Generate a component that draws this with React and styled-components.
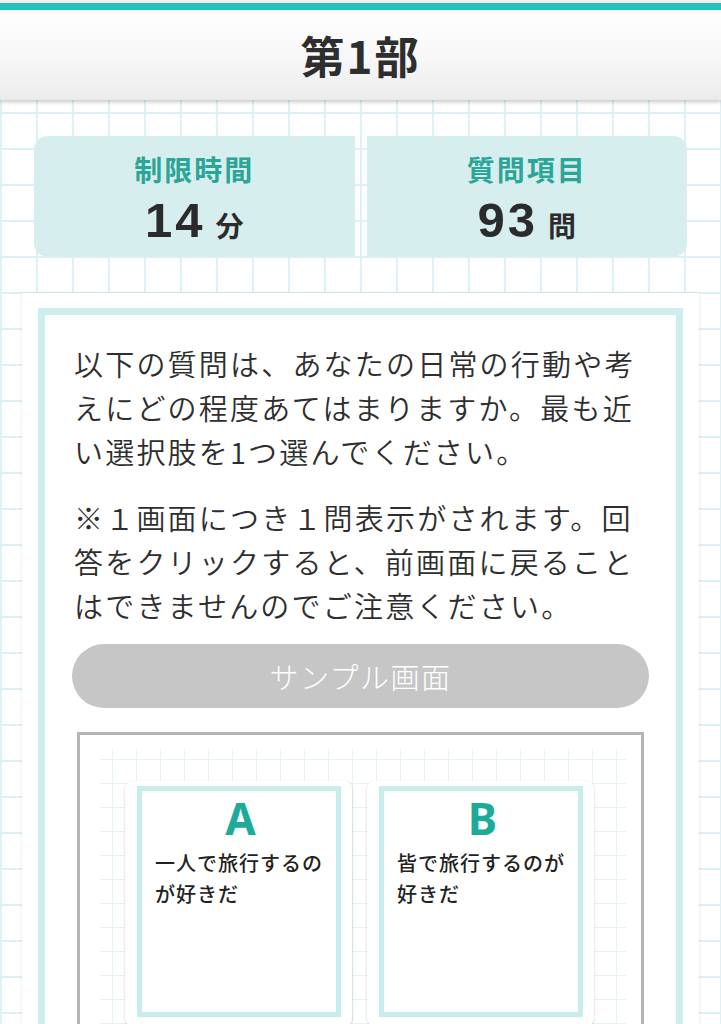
import styled, { createGlobalStyle } from 'styled-components'

const GlobalStyle = createGlobalStyle`
  html, body {
    margin: 0;
    padding: 0;
  }
  body {
    font-family: "Noto Sans CJK JP", "Noto Sans", sans-serif;
    color: #333;
    background-color: #fff;
  }
`

const Page = styled.div`
  min-height: 100vh;
  padding-bottom: 60px;
  background-color: #fff;
  background-image:
    linear-gradient(#dcf1f5 2px, transparent 2px),
    linear-gradient(90deg, #dcf1f5 2px, transparent 2px);
  background-size: 36px 36px;
  background-position: 0 4px, 0 0;
`

const Header = styled.header`
  height: 100px;
  box-sizing: border-box;
  padding-top: 10px;
  display: flex;
  align-items: center;
  justify-content: center;
  background: linear-gradient(
    to bottom,
    #f2f2f2 0,
    #f2f2f2 3px,
    #21c1bc 3px,
    #21c1bc 10px,
    #ffffff 10px,
    #f7f7f7 60%,
    #ebebeb 100%
  );
  box-shadow: 0 2px 4px rgba(0, 0, 0, 0.22);
  position: relative;
  z-index: 1;
`

const Title = styled.h1`
  margin: 0;
  font-size: 44px;
  font-weight: 700;
  letter-spacing: 2px;
  color: #2e2e2e;
  line-height: 1;
`

const Stats = styled.div`
  margin: 36px 34px 0;
  height: 121px;
  display: grid;
  grid-template-columns: 1fr 1fr;
  gap: 12px;
  border-radius: 14px;
  overflow: hidden;
`

const StatCard = styled.div`
  background: #d6eeed;
  display: flex;
  flex-direction: column;
  align-items: center;
  padding-top: 16px;
  box-sizing: border-box;
`

const StatLabel = styled.div`
  font-size: 28px;
  line-height: 34px;
  font-weight: 700;
  letter-spacing: 2px;
  color: #2aa597;
`

const StatValue = styled.div`
  display: flex;
  align-items: baseline;
  gap: 10px;
  margin-top: 6px;
  color: #2b2b2b;
  line-height: 56px;
`

const Number = styled.span`
  font-family: "Liberation Sans", Arial, sans-serif;
  font-size: 49px;
  font-weight: 700;
  letter-spacing: 3px;
`

const Unit = styled.span`
  font-size: 28px;
  font-weight: 700;
`

const Panel = styled.section`
  margin: 36px 22px 0;
  padding: 15px 16px 0;
  background: #fff;
  box-shadow: 0 0 3px rgba(0, 0, 0, 0.12);
`

const Inner = styled.div`
  border: 7px solid #cdeeee;
  border-bottom: none;
  padding: 26px 27px 40px;
`

const Paragraph = styled.p`
  margin: ${({ $first }) => ($first ? '0' : '22px 0 0')};
  padding-left: 2px;
  max-width: 572px;
  font-size: 29px;
  line-height: 44px;
  letter-spacing: 2.2px;
  color: #2e2e2e;
  font-weight: 350;
`

const SampleButton = styled.button`
  display: block;
  width: 100%;
  height: 64px;
  margin-top: 17px;
  border: none;
  border-radius: 32px;
  background: #c6c6c6;
  color: #fff;
  font-family: inherit;
  font-size: 29px;
  letter-spacing: 1.5px;
  font-weight: 300;
  cursor: pointer;
`

const SampleFrame = styled.div`
  margin: 24px 5px 0;
  border: 3px solid #b5b5b5;
  padding: 14px 15px 40px 20px;
  background: #fff;
`

const SampleGrid = styled.div`
  padding: 32px 32px 30px 25px;
  display: grid;
  grid-template-columns: 1fr 1fr;
  gap: 15px;
  background-image:
    linear-gradient(#e3f3f6 1px, transparent 1px),
    linear-gradient(90deg, #e3f3f6 1px, transparent 1px);
  background-size: 24px 24px;
  background-position: 0 10px, 12px 0;
`

const ChoiceCard = styled.div`
  background: #fff;
  border-radius: 8px;
  box-shadow: 0 1px 3px rgba(0, 0, 0, 0.18);
  padding: 5px 11px 9px 12px;
`

const ChoiceInner = styled.div`
  border: 5px solid #c9ecec;
  height: 218px;
  padding: 3px 10px 0 13px;
`

const ChoiceLetter = styled.div`
  text-align: center;
  font-family: "Noto Sans", sans-serif;
  font-size: 44px;
  line-height: 48px;
  font-weight: 700;
  color: #1dab99;
  margin-bottom: 5px;
`

const ChoiceText = styled.div`
  font-size: 20px;
  line-height: 31px;
  letter-spacing: 1px;
  font-weight: 500;
  color: #222;
`

const stats = [
  { label: '制限時間', value: '14', unit: '分' },
  { label: '質問項目', value: '93', unit: '問' },
]

const choices = [
  { letter: 'A', text: '一人で旅行するのが好きだ' },
  { letter: 'B', text: '皆で旅行するのが好きだ' },
]

export default function App() {
  return (
    <>
      <GlobalStyle />
      <Page>
        <Header>
          <Title>第1部</Title>
        </Header>

        <Stats>
          {stats.map((s) => (
            <StatCard key={s.label}>
              <StatLabel>{s.label}</StatLabel>
              <StatValue>
                <Number>{s.value}</Number>
                <Unit>{s.unit}</Unit>
              </StatValue>
            </StatCard>
          ))}
        </Stats>

        <Panel>
          <Inner>
            <Paragraph $first>
              以下の質問は、あなたの日常の行動や考えにどの程度あてはまりますか。最も近い選択肢を1つ選んでください。
            </Paragraph>
            <Paragraph>
              ※１画面につき１問表示がされます。回答をクリックすると、前画面に戻ることはできませんのでご注意ください。
            </Paragraph>
            <SampleButton>サンプル画面</SampleButton>
            <SampleFrame>
              <SampleGrid>
                {choices.map((c) => (
                  <ChoiceCard key={c.letter}>
                    <ChoiceInner>
                      <ChoiceLetter>{c.letter}</ChoiceLetter>
                      <ChoiceText>{c.text}</ChoiceText>
                    </ChoiceInner>
                  </ChoiceCard>
                ))}
              </SampleGrid>
            </SampleFrame>
          </Inner>
        </Panel>
      </Page>
    </>
  )
}
